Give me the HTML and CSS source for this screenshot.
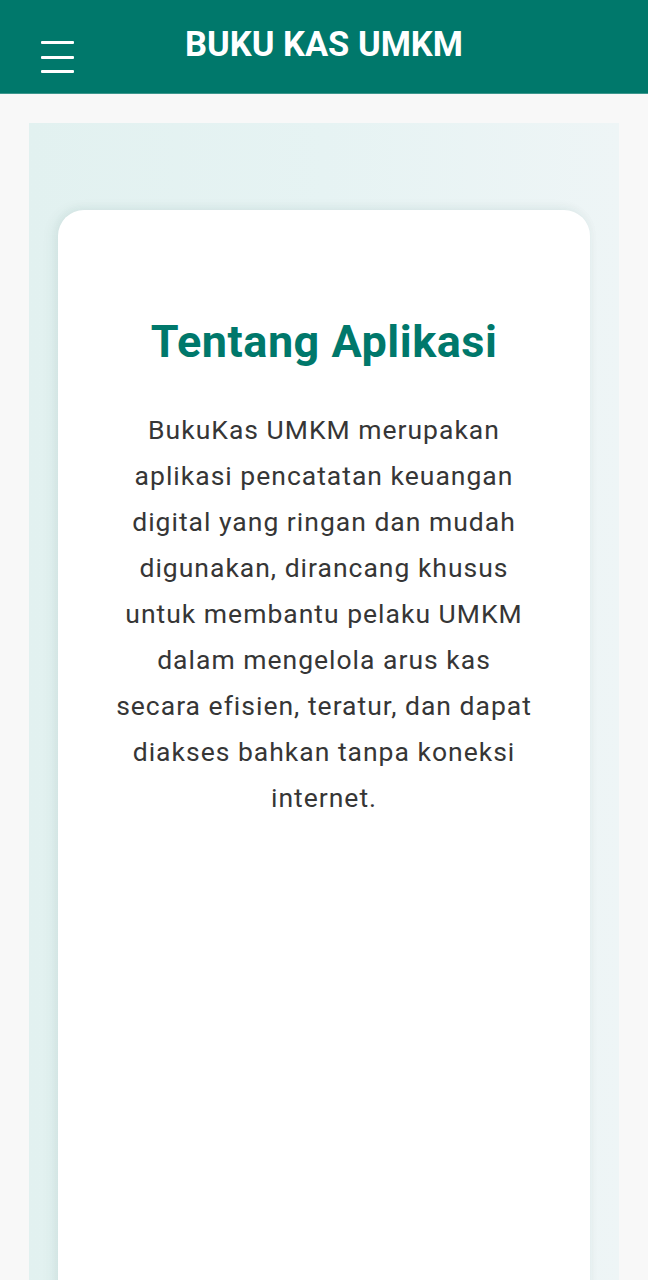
FILE: index.html
```html
<!DOCTYPE html>
<html lang="id">
<head>
<meta charset="utf-8">
<meta name="viewport" content="width=device-width, initial-scale=1">
<title>Buku Kas UMKM</title>
<link rel="stylesheet" href="styles.css">
</head>
<body>
<header class="topbar">
  <button class="menu-btn" aria-label="Menu">
    <span class="bar"></span><span class="bar"></span><span class="bar"></span>
  </button>
  <h1 class="brand">BUKU KAS UMKM</h1>
</header>
<main class="page">
  <section class="panel">
    <article class="card">
      <h2 class="card-title">Tentang Aplikasi</h2>
      <p class="card-text">BukuKas UMKM merupakan aplikasi pencatatan keuangan digital yang ringan dan mudah digunakan, dirancang khusus untuk membantu pelaku UMKM dalam mengelola arus kas secara efisien, teratur, dan dapat diakses bahkan tanpa koneksi internet.</p>
    </article>
  </section>
</main>
</body>
</html>
```
FILE: styles.css
```css
* { box-sizing: border-box; }
html, body { margin: 0; padding: 0; }
body {
  background: #f8f8f8;
  font-family: Roboto, "Noto Sans", Arial, sans-serif;
  height: 1280px;
  overflow: hidden;
}
.topbar {
  height: 94px;
  background: #00786b;
  border-bottom: 1px solid #3d978d;
  display: flex;
  align-items: flex-start;
}
.menu-btn {
  margin: 41px 0 0 41px;
  width: 33px;
  height: 32px;
  padding: 0;
  border: 0;
  background: transparent;
  display: flex;
  flex-direction: column;
  justify-content: space-between;
}
.bar {
  display: block;
  width: 33px;
  height: 3px;
  background: #ffffff;
  border-radius: 1px;
}
.brand {
  margin: 0;
  flex: 1;
  text-align: center;
  color: #ffffff;
  font-weight: 700;
  font-size: 34.5px;
  line-height: 1;
  padding-top: 27px;
  padding-right: 74px;
}
.page {
  padding: 29px 29px 0;
}
.panel {
  background: linear-gradient(90deg, #e2f1f0 0%, #e6f3f3 50%, #eef5f6 100%);
  padding: 87px 29px 0;
  min-height: 1200px;
}
.card {
  background: #ffffff;
  border-radius: 26px 26px 0 0;
  box-shadow: -4px 0 14px rgba(0, 80, 70, 0.07), 0 -2px 10px rgba(0, 80, 70, 0.04);
  min-height: 1100px;
  padding: 104px 40px 0;
  text-align: center;
}
.card-title {
  margin: 0;
  color: #00786b;
  font-weight: 700;
  font-size: 45px;
  line-height: 56px;
  letter-spacing: 0.5px;
}
.card-text {
  margin: 37px auto 0;
  max-width: 420px;
  color: #363636;
  font-size: 26.5px;
  line-height: 46px;
  letter-spacing: 1px;
}
```
